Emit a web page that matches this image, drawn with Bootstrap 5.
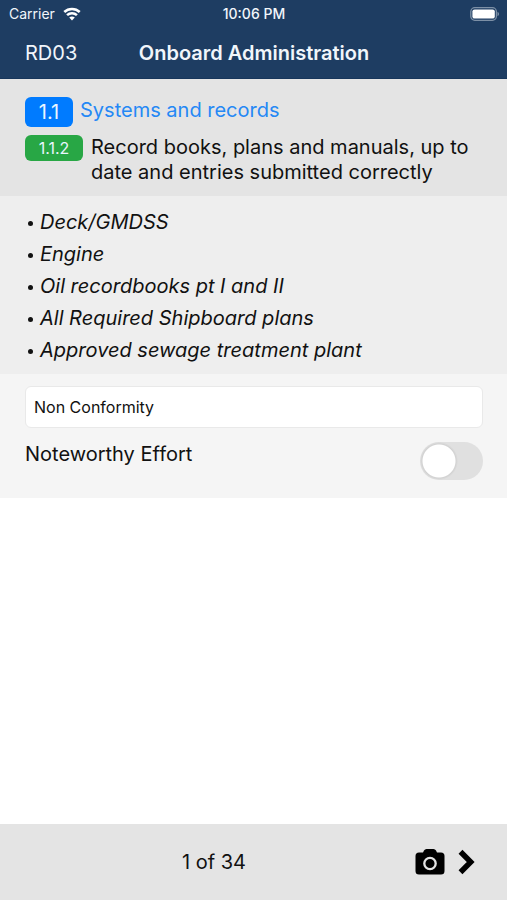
<!DOCTYPE html>
<html lang="en">
<head>
<meta charset="utf-8">
<meta name="viewport" content="width=device-width, initial-scale=1">
<title>Onboard Administration</title>
<link href="https://cdn.jsdelivr.net/npm/bootstrap@5.3.0/dist/css/bootstrap.min.css" rel="stylesheet">
<style>
body { font-family: Inter, "Liberation Sans", sans-serif; font-size: 20px; line-height: 24px; color: #111; background: #fff; }
.gutter { padding-left: 25px; padding-right: 24px; }
.top { background: #1e3d62; color: #f1f6fb; border-bottom: 1px solid #17365b; }
.thirds { display: grid; grid-template-columns: 1fr auto 1fr; align-items: center; }
.status { height: 28px; font-size: 14px; line-height: 20px; padding: 0 8px 0 9px; }
.status .clock { font-weight: 500; }
.title-row { height: 50px; }
.title-row h1 { font-size: 20px; line-height: 24px; font-weight: 600; }
.heading { background: #e4e4e4; padding-top: 18px; padding-bottom: 11px; }
.tag { border-radius: 6px; font-weight: 400; color: #e9f5ff; text-align: center; padding: 0; }
.tag-section { background: #007bff; font-size: 20px; line-height: 30px; width: 48px; margin-right: 7px; }
.tag-item { background: #28a745; font-size: 16px; line-height: 26px; width: 58px; margin-right: 8px; }
.section-link { color: #2588f5; line-height: 26px; }
.heading h2 { font-size: 20px; line-height: 25px; font-weight: 400; }
.checks { background: #eee; padding-top: 10px; padding-bottom: 8px; font-style: italic; line-height: 32px; }
.checks li { display: flex; align-items: center; }
.checks li::before { content: ""; width: 5px; height: 5px; border-radius: 50%; background: #111; margin: 2px 7px 0 3px; }
.answers { background: #f5f5f5; padding-top: 12px; padding-bottom: 18px; }
.finding { height: 42px; font-size: 16px; line-height: 24px; padding: 0 8px; border: 1px solid #e9e9e9; border-radius: 6px; color: #111; background: #fff; }
.answers .form-switch { margin-top: 14px; min-height: 38px; }
.answers .form-check-input { width: 63px; height: 38px; border: 0; background-color: #e0e0e0; background-image: radial-gradient(circle at 19px 19px, #fff 16px, #d2d2d2 17px, transparent 19px); background-size: 100% 100%; }
.answers .form-check-input:checked { background-color: #34c759; background-image: radial-gradient(circle at 44px 19px, #fff 16px, transparent 17px); }
.pager { background: #e4e4e4; height: 76px; padding-right: 32px; }
.pager .count { padding-right: 12px; }
.pager button { color: #000; line-height: 0; }
.next { margin-left: 13px; }
</style>
<script src="https://cdn.jsdelivr.net/npm/bootstrap@5.3.0/dist/js/bootstrap.bundle.min.js"></script>
</head>
<body class="d-flex flex-column min-vh-100">
<header class="top">
  <div class="status thirds">
    <div class="d-flex align-items-center gap-2">
      <span>Carrier</span>
      <svg width="18" height="14" viewBox="0 0 20 15" fill="none" stroke="#fff" stroke-width="2.8" aria-hidden="true">
        <path d="M1.4 5.3C6.2.7 13.8.7 18.6 5.3"/>
        <path d="M4.500 8.800c3.100-3 7.900-3 11 0"/>
        <path d="M10 14.600 6.900 11.500c1.800-1.600 4.400-1.600 6.200 0z" fill="#fff" stroke="none"/>
      </svg>
    </div>
    <span class="clock">10:06 PM</span>
    <svg class="ms-auto" width="29" height="14" viewBox="0 0 29 14" aria-hidden="true">
      <rect x=".8" y=".7" width="25.600" height="12.600" rx="4" fill="none" stroke="#7d90a6" stroke-width="1.300"/>
      <rect x="2.400" y="2.400" width="22.400" height="9.200" rx="2.200" fill="#fff"/>
      <path d="M27.500 4.700c2 1 2 3.600 0 4.600z" fill="#7d90a6"/>
    </svg>
  </div>
  <div class="title-row thirds gutter">
    <span>RD03</span>
    <h1 class="m-0">Onboard Administration</h1>
  </div>
</header>
<main class="flex-grow-1">
  <section class="heading gutter">
    <div class="d-flex align-items-start mb-2">
      <span class="badge tag tag-section">1.1</span>
      <a href="#" class="section-link text-decoration-none">Systems and records</a>
    </div>
    <div class="d-flex align-items-start">
      <span class="badge tag tag-item flex-shrink-0">1.1.2</span>
      <h2 class="m-0">Record books, plans and manuals, up to date and entries submitted correctly</h2>
    </div>
  </section>
  <ul class="checks gutter list-unstyled m-0">
    <li>Deck/GMDSS</li>
    <li>Engine</li>
    <li>Oil recordbooks pt I and II</li>
    <li>All Required Shipboard plans</li>
    <li>Approved sewage treatment plant</li>
  </ul>
  <form class="answers gutter">
    <select class="form-select finding" aria-label="Finding">
      <option>Non Conformity</option>
    </select>
    <div class="form-check form-switch d-flex justify-content-between p-0 mb-0">
      <label class="form-check-label" for="noteworthy">Noteworthy Effort</label>
      <input class="form-check-input m-0" type="checkbox" role="switch" id="noteworthy">
    </div>
  </form>
</main>
<footer class="pager gutter d-flex align-items-center">
  <span class="count flex-grow-1 text-center">1 of 34</span>
  <button type="button" class="btn p-0 border-0" aria-label="Take photo">
    <svg width="30" height="26" viewBox="0 0 30 26" aria-hidden="true">
      <path d="M4 3.500h4l1-2Q9.800 0 11.500 0h7q1.700 0 2.500 1.500l1 2h4q3.500 0 3.500 3.500v15q0 3.500-3.500 3.500H4Q.5 25.500.5 22V7Q.5 3.500 4 3.500z" fill="#000"/>
      <circle cx="15" cy="14.500" r="5.700" fill="none" stroke="#e4e4e4" stroke-width="2.300"/>
    </svg>
  </button>
  <button type="button" class="btn p-0 border-0 next" aria-label="Next">
    <svg width="17" height="26" viewBox="0 0 17 26" fill="none" stroke="#000" stroke-width="5.500" aria-hidden="true">
      <path d="m2.500 2.800 10.200 10.200L2.500 23.200"/>
    </svg>
  </button>
</footer>
</body>
</html>
